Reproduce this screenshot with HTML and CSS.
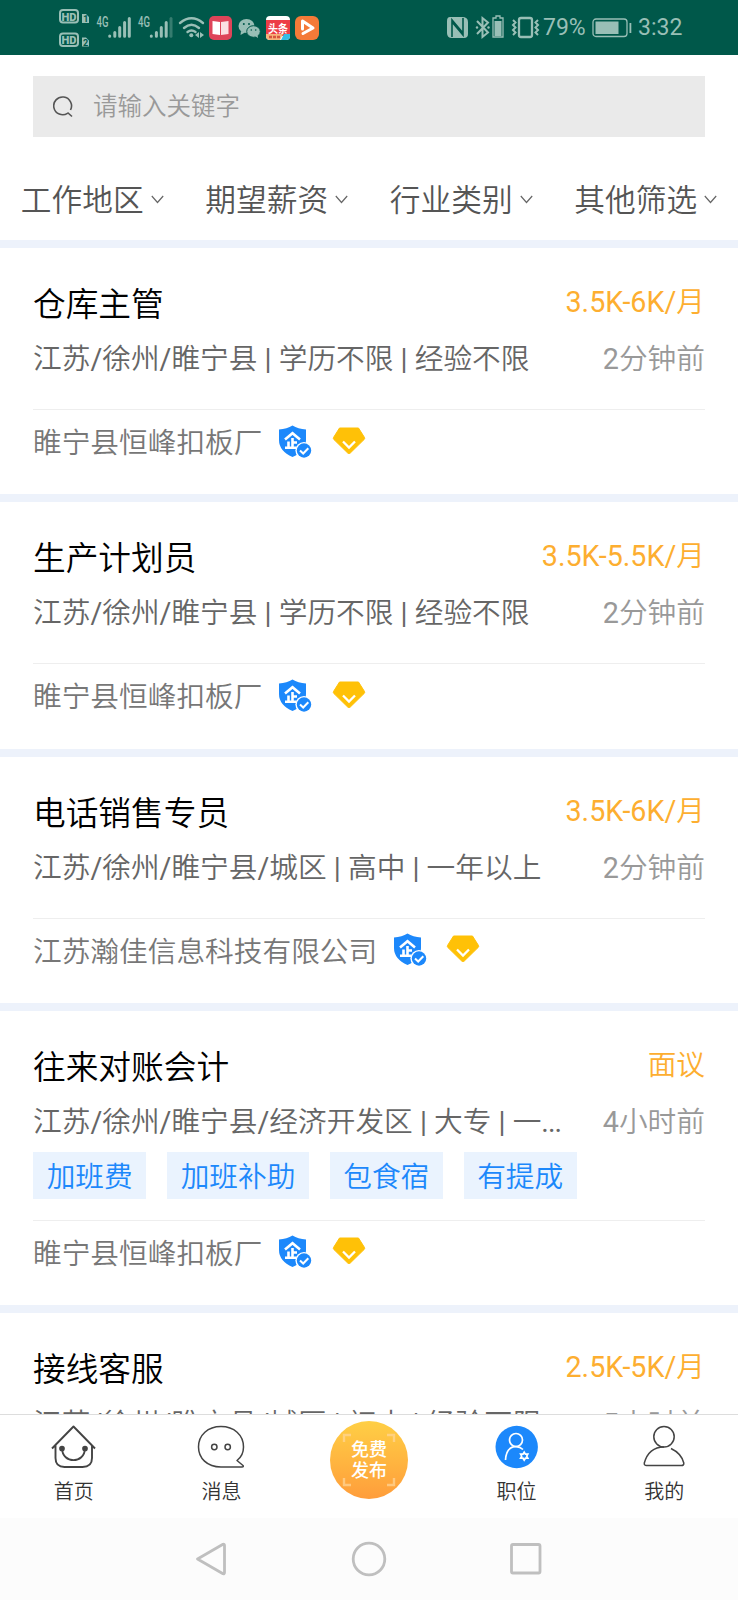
FILE: index.html
```html
<!DOCTYPE html>
<html lang="zh-CN">
<head>
<meta charset="utf-8">
<title>职位</title>
<link rel="stylesheet" href="styles.css">
</head>
<body>
<svg class="defs" width="0" height="0">
  <symbol id="shield" viewBox="0 0 34 34">
    <path d="M14.500 0.500 Q20 4 28 4.500 V15 Q28 26 14.500 32 Q1 26 1 15 V4.500 Q9 4 14.500 0.500Z" fill="#1c88fb"/>
    <path d="M7 14.500 L14.500 8.300 L22 14.500 M14.500 13 V23 M15 17.500 H19 M10.500 16.500 V23 M7 22.800 H18.500" fill="none" stroke="#fff" stroke-width="2.600"/>
    <circle cx="26" cy="25.500" r="8.600" fill="#fff"/>
    <circle cx="26" cy="25.500" r="7.200" fill="#1c88fb"/>
    <path d="M22 25.500 L25.200 28.500 L30.300 23.200" fill="none" stroke="#fff" stroke-width="2"/>
  </symbol>
  <symbol id="gem" viewBox="0 0 34 28">
    <path d="M7.500 1 H26.500 L32.500 10.500 Q33 11.500 32.300 12.300 L18.300 26 Q17 27 15.700 26 L1.700 12.300 Q1 11.500 1.500 10.500Z" fill="#ffc107" stroke="#ffc107" stroke-linejoin="round"/>
    <path d="M11 14.500 L17 20.500 L23 14.500" fill="none" stroke="#fff" stroke-width="2.300"/>
  </symbol>
  <symbol id="chev" viewBox="0 0 13 9"><path d="M0.800 1 L6.500 7.500 L12.200 1" fill="none" stroke="#666" stroke-width="1.200"/></symbol>
</svg>
<div class="screen">
  <header class="status">
    <svg width="209" height="55" viewBox="55 0 209 55" fill="#99bfb6">
      <g fill="none" stroke="#99bfb6" stroke-width="2"><rect x="60" y="10" width="18" height="12.500" rx="3"/><rect x="60" y="33.500" width="18" height="12.500" rx="3"/></g>
      <text x="61.500" y="20.700" class="hd" textLength="15" lengthAdjust="spacingAndGlyphs">HD</text>
      <text x="61.500" y="44.200" class="hd" textLength="15" lengthAdjust="spacingAndGlyphs">HD</text>
      <path d="M82 14 H86 L89 17 V23 H82Z M82 37.500 H86 L89 40.500 V46.500 H82Z"/>
      <text x="83.200" y="22.300" class="sim">1</text><text x="83" y="45.800" class="sim">2</text>
      <text x="96.500" y="27" class="net" textLength="12" lengthAdjust="spacingAndGlyphs">4G</text>
      <text x="138" y="27" class="net" textLength="12" lengthAdjust="spacingAndGlyphs">4G</text>
      <g stroke="#99bfb6" stroke-width="3" stroke-linecap="round">
        <path d="M109.700 36 V36.200 M114.800 32.500 V36.300 M119.700 27.500 V36.300 M124.600 22.500 V36.300 M129.300 18.500 V36.300"/>
        <path d="M151.300 36 V36.200 M156.400 32.500 V36.300 M161.300 27.500 V36.300 M166.200 22.500 V36.300"/>
        <path d="M171 18.500 V36.300" opacity=".35"/>
      </g>
      <g fill="none" stroke="#99bfb6" stroke-width="2.400" stroke-linecap="round"><path d="M180 23 Q191.500 13.500 203 23 M184 28 Q191.500 21.500 199 28 M187.500 32 Q191.500 29 195.500 32"/></g>
      <circle cx="191.300" cy="35.200" r="2"/><path d="M195 35 L199 32 V38Z M200 32 L204 35 L200 38Z"/>
      <rect x="209" y="16" width="23" height="24" rx="5" fill="#de4459"/>
      <path d="M212.500 21 L220 22 V35 L212.500 34Z" fill="#fff"/><path d="M221 22 L228.500 21 V34 L221 35Z" fill="#fbe0e3"/>
      <ellipse cx="246.500" cy="26" rx="8" ry="7"/><path d="M241 31 L240.500 35 L245 32.500Z"/>
      <ellipse cx="253.500" cy="31.500" rx="6.800" ry="5.800" stroke="#00584a"/><path d="M255 36 L258 38 L257.500 34.500Z"/>
      <g fill="#00584a"><circle cx="243.800" cy="24" r="1"/><circle cx="249" cy="24" r="1"/><circle cx="251.300" cy="30" r=".8"/><circle cx="255.700" cy="30" r=".8"/></g>
    </svg>
    <svg width="55" height="55" viewBox="264 0 55 55">
      <rect x="266" y="16" width="24" height="24" rx="4" fill="#fff"/><rect x="266" y="20" width="24" height="16" fill="#ed3d46"/>
      <text x="268" y="32.500" class="toutiao" textLength="20" lengthAdjust="spacingAndGlyphs">头条</text>
      <path d="M266 34 H283 L280 40 H270 Q266 40 266 36Z" fill="#f7b27a"/><path d="M284 34 H290 V36 Q290 40 286 40 H281Z" fill="#34bde4"/>
      <path d="M269 37 H280" stroke="#d8543e" stroke-width="2.500" stroke-dasharray="3 1"/>
      <rect x="295" y="16" width="24" height="24" rx="6" fill="#f47a38"/>
      <path d="M303 33.500 L313 28 L302.500 21 V29" fill="none" stroke="#fff" stroke-width="3" stroke-linecap="round" stroke-linejoin="round"/>
    </svg>
    <div class="status-right">
      <svg width="96" height="55" viewBox="445 0 96 55">
        <path d="M450 17 H462 Q468 17 468 22 V34 Q468 38 464 38 H452 Q447 38 447 33 V21 Q447 17 450 17Z" fill="#99bfb6"/>
        <path d="M452 37 V20 L463 33 M463 18 V35 L452 22" fill="none" stroke="#00584a" stroke-width="1.600"/>
        <path d="M477 21 L488 32.500 L482.500 37 V18 L488 22.500 L477 34" fill="none" stroke="#99bfb6" stroke-width="2"/>
        <circle cx="477" cy="27.500" r="1.200" fill="#99bfb6"/><circle cx="488.500" cy="27.500" r="1.200" fill="#99bfb6"/>
        <path d="M496 16 H500 V18 H503 V37 H493 V18 H496Z" fill="none" stroke="#99bfb6" stroke-width="1.300"/><rect x="494.500" y="21" width="7" height="15" fill="#99bfb6"/>
        <rect x="519" y="18" width="13" height="19" rx="2" fill="none" stroke="#99bfb6" stroke-width="2.300"/>
        <path d="M513 20 L515.500 22.500 L513 25 L515.500 27.500 L513 30 L515.500 32.500 L513 35 M538 20 L535.500 22.500 L538 25 L535.500 27.500 L538 30 L535.500 32.500 L538 35" fill="none" stroke="#99bfb6" stroke-width="2"/>
      </svg>
      <span class="pct">79%</span>
      <svg width="40" height="20" viewBox="0 0 40 20"><rect x="1" y="1" width="34" height="17.500" rx="3" fill="none" stroke="#99bfb6" stroke-width="1.300"/><rect x="3.500" y="3.500" width="23" height="12.500" fill="#99bfb6"/><rect x="37.500" y="5" width="1.800" height="10" fill="#99bfb6"/></svg>
      <span class="clock">3:32</span>
    </div>
  </header>

  <div class="search">
    <svg width="21" height="22" viewBox="0 0 21 22"><path d="M14.500 17.300 A8.900 8.900 0 1 1 17.500 14 M14.500 16.500 L19 20.500" fill="none" stroke="#555" stroke-width="1.600"/></svg>
    <span>请输入关键字</span>
  </div>

  <nav class="filters">
    <div class="filter">工作地区<svg width="13" height="9"><use href="#chev"/></svg></div>
    <div class="filter">期望薪资<svg width="13" height="9"><use href="#chev"/></svg></div>
    <div class="filter">行业类别<svg width="13" height="9"><use href="#chev"/></svg></div>
    <div class="filter">其他筛选<svg width="13" height="9"><use href="#chev"/></svg></div>
  </nav>

  <main class="list">
    <article class="job">
      <div class="head"><h2>仓库主管</h2><span class="pay"><b>3.5K-6K/</b>月</span></div>
      <div class="info"><span>江苏<b>/</b>徐州<b>/</b>睢宁县<b> | </b>学历不限<b> | </b>经验不限</span><time><b>2</b>分钟前</time></div>
      <div class="company">睢宁县恒峰扣板厂<svg class="shield"><use href="#shield"/></svg><svg class="gem"><use href="#gem"/></svg></div>
    </article>
    <article class="job">
      <div class="head"><h2>生产计划员</h2><span class="pay"><b>3.5K-5.5K/</b>月</span></div>
      <div class="info"><span>江苏<b>/</b>徐州<b>/</b>睢宁县<b> | </b>学历不限<b> | </b>经验不限</span><time><b>2</b>分钟前</time></div>
      <div class="company">睢宁县恒峰扣板厂<svg class="shield"><use href="#shield"/></svg><svg class="gem"><use href="#gem"/></svg></div>
    </article>
    <article class="job">
      <div class="head"><h2>电话销售专员</h2><span class="pay"><b>3.5K-6K/</b>月</span></div>
      <div class="info"><span>江苏<b>/</b>徐州<b>/</b>睢宁县<b>/</b>城区<b> | </b>高中<b> | </b>一年以上</span><time><b>2</b>分钟前</time></div>
      <div class="company">江苏瀚佳信息科技有限公司<svg class="shield"><use href="#shield"/></svg><svg class="gem"><use href="#gem"/></svg></div>
    </article>
    <article class="job">
      <div class="head"><h2>往来对账会计</h2><span class="pay">面议</span></div>
      <div class="info"><span>江苏<b>/</b>徐州<b>/</b>睢宁县<b>/</b>经济开发区<b> | </b>大专<b> | </b>一<b class="dots">...</b></span><time><b>4</b>小时前</time></div>
      <div class="tags"><span>加班费</span><span>加班补助</span><span>包食宿</span><span>有提成</span></div>
      <div class="company">睢宁县恒峰扣板厂<svg class="shield"><use href="#shield"/></svg><svg class="gem"><use href="#gem"/></svg></div>
    </article>
    <article class="job">
      <div class="head"><h2>接线客服</h2><span class="pay"><b>2.5K-5K/</b>月</span></div>
      <div class="info"><span>江苏<b>/</b>徐州<b>/</b>睢宁县<b>/</b>城区<b> | </b>初中<b> | </b>经验不限</span><time><b>5</b>小时前</time></div>
    </article>
  </main>

  <footer class="tabs">
    <div class="tab">
      <svg width="48" height="46" viewBox="0 0 48 46" fill="none" stroke="#444" stroke-width="1.900" stroke-linejoin="round"><path d="M2 24.500 L23.500 2.500 L45 24.500 M5.500 21 V34 Q5.500 43 14.500 43 H32.500 Q42 43 42 34 V21 M12 24.500 C12.500 40 34.500 40 35 24.500"/><circle cx="12" cy="24.500" r="1.900" fill="#444"/><circle cx="35" cy="24.500" r="1.900" fill="#444"/></svg>
      <span>首页</span>
    </div>
    <div class="tab">
      <svg width="48" height="46" viewBox="0 0 48 46" fill="none" stroke="#444" stroke-width="1.500" stroke-linejoin="round"><path d="M24 43 C10 43 1.500 34 1.500 23 C1.500 11 11 2.500 24 2.500 C37 2.500 46.500 11 46.500 23 C46.500 29 44 33.500 40 36.500 L46 41.500 Q47 43 45 43Z"/><circle cx="17.300" cy="23" r="2.700"/><circle cx="30.700" cy="23" r="2.700"/></svg>
      <span>消息</span>
    </div>
    <div class="tab">
      <div class="publish">
        <svg class="corners" width="54" height="54" viewBox="0 0 54 54" fill="none" stroke="#ffd79a" stroke-width="2.400"><path d="M2 9 V2 H9 M45 2 H52 V9 M2 45 V52 H9 M45 52 H52 V45"/></svg>
        <span>免费<br>发布</span>
      </div>
    </div>
    <div class="tab">
      <svg width="48" height="46" viewBox="0 0 48 46" fill="none" stroke="#fff" stroke-width="1.700"><circle cx="23.700" cy="23" r="21.200" fill="#1c88fb" stroke="none"/><circle cx="23" cy="16" r="6.500"/><path d="M12.500 36 C13 27 17 22.700 23 22.700 Q27 22.700 30 25.500"/><path d="M31.200 28.200 L32.400 30.200 L34.800 30.200 L33.700 32.200 L34.800 34.200 L32.400 34.200 L31.200 36.200 L30 34.200 L27.600 34.200 L28.700 32.200 L27.600 30.200 L30 30.200Z"/></svg>
      <span>职位</span>
    </div>
    <div class="tab">
      <svg width="48" height="46" viewBox="0 0 48 46" fill="none" stroke="#444" stroke-width="1.500" stroke-linejoin="round"><circle cx="24" cy="12.700" r="10.200"/><path d="M31 24.500 Q41.500 29.500 43.800 39 Q44 41.500 41.500 41.500 H6.500 Q4 41.500 4.300 39 C7 29 14 23 24 22.900"/></svg>
      <span>我的</span>
    </div>
  </footer>

  <div class="sysnav">
    <svg width="32" height="36" viewBox="0 0 32 36"><path d="M1.500 18 L27 3.300 Q28.500 3 28.500 4.500 V31.500 Q28.500 33 27 32.700Z"/></svg>
    <svg width="36" height="36" viewBox="0 0 36 36"><circle cx="18" cy="18" r="15.800"/></svg>
    <svg width="32" height="36" viewBox="0 0 32 36"><rect x="1.500" y="3.500" width="28.500" height="28.500" rx="1.500"/></svg>
  </div>
</div>
</body>
</html>
```
FILE: styles.css
```css
* { box-sizing: border-box; }
body { margin: 0; background: #fff; font-family: Roboto, "Noto Sans CJK SC", sans-serif; font-weight: 350; }
svg { display: block; flex: none; }
b { font-weight: 400; }
.defs { position: absolute; }
.screen { width: 738px; height: 1600px; display: flex; flex-direction: column; overflow: hidden; }

.status { flex: none; height: 55px; background: #00584a; display: flex; padding-left: 55px; color: #99bfb6; font-size: 23px; font-weight: 400; }
.hd { font: 900 11px Roboto, sans-serif; }
.sim { font: 700 9px Roboto, sans-serif; fill: #00584a; }
.net { font: 500 15px Roboto, sans-serif; }
.toutiao { font: 700 11px "Noto Sans CJK SC", sans-serif; fill: #fff; }
.status-right { display: flex; align-items: center; margin-left: 126px; line-height: 57px; }
.pct { width: 51px; padding-left: 2px; }
.clock { margin-left: 6px; }

.search { flex: none; margin: 21px 33px 0; height: 61px; background: #eaeaea; display: flex; align-items: center; padding-left: 20px; color: #999; font-size: 24.500px; }
.search span { margin-left: 19px; margin-top: -5px; }

.filters { flex: none; height: 111px; padding-top: 15px; border-bottom: 8px solid #edf2fb; display: flex; }
.filter { flex: 1; display: flex; align-items: center; justify-content: center; gap: 7px; font-size: 30.700px; color: #555; padding-top: 9px; height: 88px; line-height: 60px; }
.filter svg { margin-top: -3px; }

.list { flex: 1; min-height: 0; overflow: hidden; }
.job { padding: 30px 33px 17.900px; border-bottom: 8px solid #edf2fb; }
.head { display: flex; justify-content: space-between; height: 54px; line-height: 55px; }
h2 { margin: 0; font-size: 32.700px; font-weight: 350; color: #000; }
.pay { font-size: 28.700px; color: #fdae30; line-height: 49px; }
.info { display: flex; justify-content: space-between; height: 54px; line-height: 55px; font-size: 28.700px; color: #666; white-space: nowrap; }
.info time { color: #999; }
.dots { letter-spacing: -1px; }
.tags { display: flex; gap: 20.500px; margin-top: 3px; margin-bottom: -2.500px; }
.tags span { height: 47px; line-height: 51px; padding: 0 13.700px; background: #eaf3fe; color: #1c88fb; font-size: 28.700px; }
.company { margin-top: 23px; margin-bottom: .5px; border-top: 1px solid #eee; height: 67px; line-height: 68px; display: flex; align-items: center; font-size: 28.700px; color: #777; }
.shield { width: 34px; height: 34px; margin: -3px 0 0 15.500px; }
.gem { width: 34px; height: 28px; margin: -5px 0 0 19.500px; }

.tabs { flex: none; height: 104px; border-top: 1px solid #ddd; background: #fff; display: flex; }
.tab { flex: 1; display: flex; flex-direction: column; align-items: center; padding-top: 9px; font-size: 20px; color: #333; line-height: 28px; }
.tab > span { margin-top: 8px; }
.publish { position: relative; margin-top: -3px; width: 78px; height: 78px; border-radius: 50%; background: linear-gradient(#ffcf45, #ff9d3b); display: flex; align-items: center; justify-content: center; color: #fff; font-size: 18px; line-height: 20.500px; font-weight: 500; }
.publish span { padding-top: 1px; }
.corners { position: absolute; left: 12px; top: 12px; opacity: .7; }

.sysnav { flex: none; height: 82px; background: #fcfcfc; display: flex; align-items: center; justify-content: center; gap: 123px; fill: none; stroke: #bfbfbf; stroke-width: 2.800px; stroke-linejoin: round; }
```
